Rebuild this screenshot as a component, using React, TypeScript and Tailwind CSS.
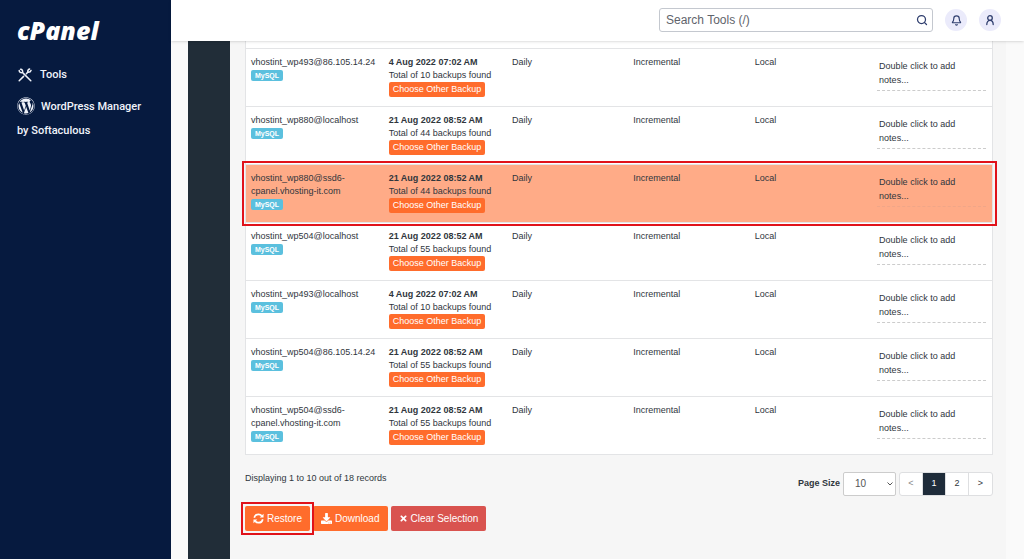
import { Bell, Search } from "lucide-react";
import { FaDownload, FaTimes, FaWordpress } from "react-icons/fa";

type Backup = {
  user: string;
  date: string;
  total: number;
  selected?: boolean;
};

const backups: Backup[] = [
  { user: "vhostint_wp493@86.105.14.24", date: "4 Aug 2022 07:02 AM", total: 10 },
  { user: "vhostint_wp880@localhost", date: "21 Aug 2022 08:52 AM", total: 44 },
  { user: "vhostint_wp880@ssd6-cpanel.vhosting-it.com", date: "21 Aug 2022 08:52 AM", total: 44, selected: true },
  { user: "vhostint_wp504@localhost", date: "21 Aug 2022 08:52 AM", total: 55 },
  { user: "vhostint_wp493@localhost", date: "4 Aug 2022 07:02 AM", total: 10 },
  { user: "vhostint_wp504@86.105.14.24", date: "21 Aug 2022 08:52 AM", total: 55 },
  { user: "vhostint_wp504@ssd6-cpanel.vhosting-it.com", date: "21 Aug 2022 08:52 AM", total: 55 },
];

function ToolsIcon() {
  return (
    <svg viewBox="0 0 14 14" className="size-[14px]" fill="none" stroke="currentColor" strokeWidth="1.500" strokeLinecap="round">
      <path d="M1.2 12.8 5.6 8.400M8.400 5.600l1.400-1.400M9.800 4.200c-.2-1.600.6-2.800 1.800-3.200M9.800 4.200c1.600.2 2.800-.6 3.200-1.800" />
      <path d="M4.4 4.4 12.8 12.8M2.6 1.2c1.600 0 2.600 1.800 1.800 3.200-1.400.8-3.200-.2-3.200-1.800" />
    </svg>
  );
}

function UserIcon() {
  return (
    <svg viewBox="0 0 12 12" className="size-[12px]" fill="none" stroke="currentColor" strokeWidth="1.3" strokeLinecap="round">
      <circle cx="6" cy="4" r="2.300" />
      <path d="M2.800 10.600c0-2.600 1.200-4.200 3.200-4.200s3.200 1.600 3.200 4.200" />
    </svg>
  );
}

function RefreshIcon() {
  return (
    <svg viewBox="0 0 12 12" className="size-[11px]" fill="none" stroke="currentColor" strokeWidth="1.900">
      <path d="M1.400 5.200C1.800 2.800 3.700 1.400 6 1.400c1.500 0 2.700.6 3.600 1.700M10.600 6.800c-.4 2.400-2.300 3.800-4.600 3.800-1.500 0-2.700-.6-3.600-1.700" />
      <path d="M11.500.8v4.200H7.300zM.5 11.200V7h4.200z" fill="currentColor" stroke="none" />
    </svg>
  );
}

function Sidebar() {
  return (
    <aside className="w-[171px] shrink-0 bg-[#061a3f] px-[17px] pt-[14px] text-[#f0f3fa]">
      <a href="#" className="block font-['Open_Sans',sans-serif] text-[25px] leading-8 font-extrabold text-white italic">
        cPanel
      </a>
      <nav className="mt-[17px] font-[Roboto,sans-serif] text-[11px] leading-[24px] font-medium">
        <a href="#" className="flex items-center gap-2 pl-px">
          <ToolsIcon />
          Tools
        </a>
        <a href="#" className="mt-2 block">
          <FaWordpress className="mr-1.5 inline size-[18px] align-[-5px]" />
          WordPress Manager by Softaculous
        </a>
      </nav>
    </aside>
  );
}

function Header() {
  return (
    <header className="relative flex h-[41px] items-center justify-end bg-white pr-[23px] pb-px text-[#2f3e6e] shadow-sm">
      <div className="mr-3 flex h-6 w-[274px] items-center rounded-[3px] border border-[#c4c8cf] pr-1 pl-1.5">
        <input
          type="text"
          aria-label="Search Tools"
          placeholder="Search Tools (/)"
          className="min-w-0 flex-1 text-[12px] outline-none placeholder:text-[#5f646b]"
        />
        <button type="button" aria-label="Search">
          <Search className="size-[12px]" strokeWidth={2.5} />
        </button>
      </div>
      <button type="button" aria-label="Notifications" className="mr-3 flex size-[22px] items-center justify-center rounded-full bg-[#ebebfb]">
        <Bell className="size-[11px]" strokeWidth={2.5} />
      </button>
      <button type="button" aria-label="Account" className="flex size-[22px] items-center justify-center rounded-full bg-[#ebebfb]">
        <UserIcon />
      </button>
    </header>
  );
}

function BackupRow({ user, date, total, selected }: Backup) {
  const [head, tail] = user.split("ssd6-");
  return (
    <tr className={`relative h-[58px] border-t border-[#e3e4e6] align-top ${selected ? "z-10 bg-[#ffab87]" : "bg-white"}`}>
      <td className="pt-[7px] pl-[5px] leading-[13px] whitespace-nowrap">
        {tail ? (
          <>
            {head}ssd6-
            <br />
            {tail}
          </>
        ) : (
          user
        )}
        <span className="mt-px block h-[11px] w-8 rounded-[2px] bg-[#5bc0de] text-center text-[7px] leading-[11px] font-bold text-white">MySQL</span>
      </td>
      <td className="px-[5px] pt-[7px] leading-[13px]">
        <strong className="block font-bold whitespace-nowrap">{date}</strong>
        <span className="block whitespace-nowrap">Total of {total} backups found</span>
        <button type="button" className="block h-[15px] rounded-[2px] bg-[#ff6c2c] px-1 whitespace-nowrap text-white">
          Choose Other Backup
        </button>
      </td>
      <td className="px-[5px] pt-[7px] leading-[13px]">Daily</td>
      <td className="px-[5px] pt-[7px] leading-[13px]">Incremental</td>
      <td className="px-[5px] pt-[7px] leading-[13px]">Local</td>
      <td className="px-1.5 pt-[10px]">
        <div className={`border-b border-dashed px-0.5 pb-[3px] leading-[14px] ${selected ? "border-[#f0a688]" : "border-[#ccc]"}`}>
          Double click to add
          <br />
          notes...
        </div>
        {selected && <div className="pointer-events-none absolute -inset-1 border-2 border-[#e0121a]" />}
      </td>
    </tr>
  );
}

function Pager() {
  const item = "flex h-[22px] w-[23px] items-center justify-center border-r border-[#dedfe1] last:border-r-0";
  return (
    <div className="flex items-center">
      <label htmlFor="page-size" className="mr-[3px] font-bold">
        Page Size
      </label>
      <div className="relative mr-[3px]">
        <select id="page-size" defaultValue="10" className="block h-6 w-[53px] appearance-none rounded-[2px] border border-[#ccc] bg-white pl-[11px] text-[10px] text-[#555]">
          <option>10</option>
          <option>25</option>
          <option>50</option>
        </select>
        <svg viewBox="0 0 6 4" className="pointer-events-none absolute top-[10px] right-[3px] h-1 w-1.5" fill="none" stroke="#555">
          <path d="M.5.5 3 3 5.500.5" />
        </svg>
      </div>
      <nav aria-label="Pages" className="flex overflow-hidden rounded-[3px] border border-[#dedfe1] bg-white">
        <a href="#" className={`${item} text-[#888]`}>&lt;</a>
        <a href="#" className={`${item} bg-[#1f2c3a] text-white`}>1</a>
        <a href="#" className={item}>2</a>
        <a href="#" className={item}>&gt;</a>
      </nav>
    </div>
  );
}

export default function App() {
  const action = "flex h-[25px] items-center gap-[3px] rounded-[2px] px-2 text-[10px] whitespace-nowrap text-white";
  return (
    <div className="flex min-h-screen bg-[#fafafa] font-['Liberation_Sans',Arial,sans-serif] text-[#30363d]">
      <Sidebar />
      <div className="flex min-w-0 flex-1 flex-col">
        <Header />
        <main className="flex flex-1 pr-[18px] pl-[17px] text-[9px]">
          <div className="w-[42px] shrink-0 bg-[#212d38]" />
          <div className="min-w-0 flex-1 bg-[#f6f6f6] pr-[13px] pl-[15px]">
            <table aria-label="Backups" className="w-full table-fixed border-collapse border border-t-0 border-[#e3e4e6]">
              <colgroup>
                <col className="w-[18.5%]" />
                <col className="w-[16.5%]" />
                <col />
                <col />
                <col />
                <col />
              </colgroup>
              <tbody>
                <tr className="h-[7px] bg-white">
                  <td colSpan={6} />
                </tr>
                {backups.map((b, i) => (
                  <BackupRow key={i} {...b} />
                ))}
              </tbody>
            </table>
            <div className="mt-[17px] flex items-start justify-between">
              <p className="leading-[13px]">Displaying 1 to 10 out of 18 records</p>
              <Pager />
            </div>
            <div className="mt-[10px] flex gap-[3px]">
              <div className="relative z-10">
                <button type="button" className={`${action} bg-[#ff6c2c]`}>
                  <RefreshIcon />
                  Restore
                </button>
                <div className="pointer-events-none absolute -inset-1 border-2 border-[#e0121a]" />
              </div>
              <button type="button" className={`${action} bg-[#ff6c2c]`}>
                <FaDownload className="size-[11px]" />
                Download
              </button>
              <button type="button" className={`${action} bg-[#d9534f]`}>
                <FaTimes className="size-[9px]" />
                Clear Selection
              </button>
            </div>
          </div>
        </main>
      </div>
    </div>
  );
}
